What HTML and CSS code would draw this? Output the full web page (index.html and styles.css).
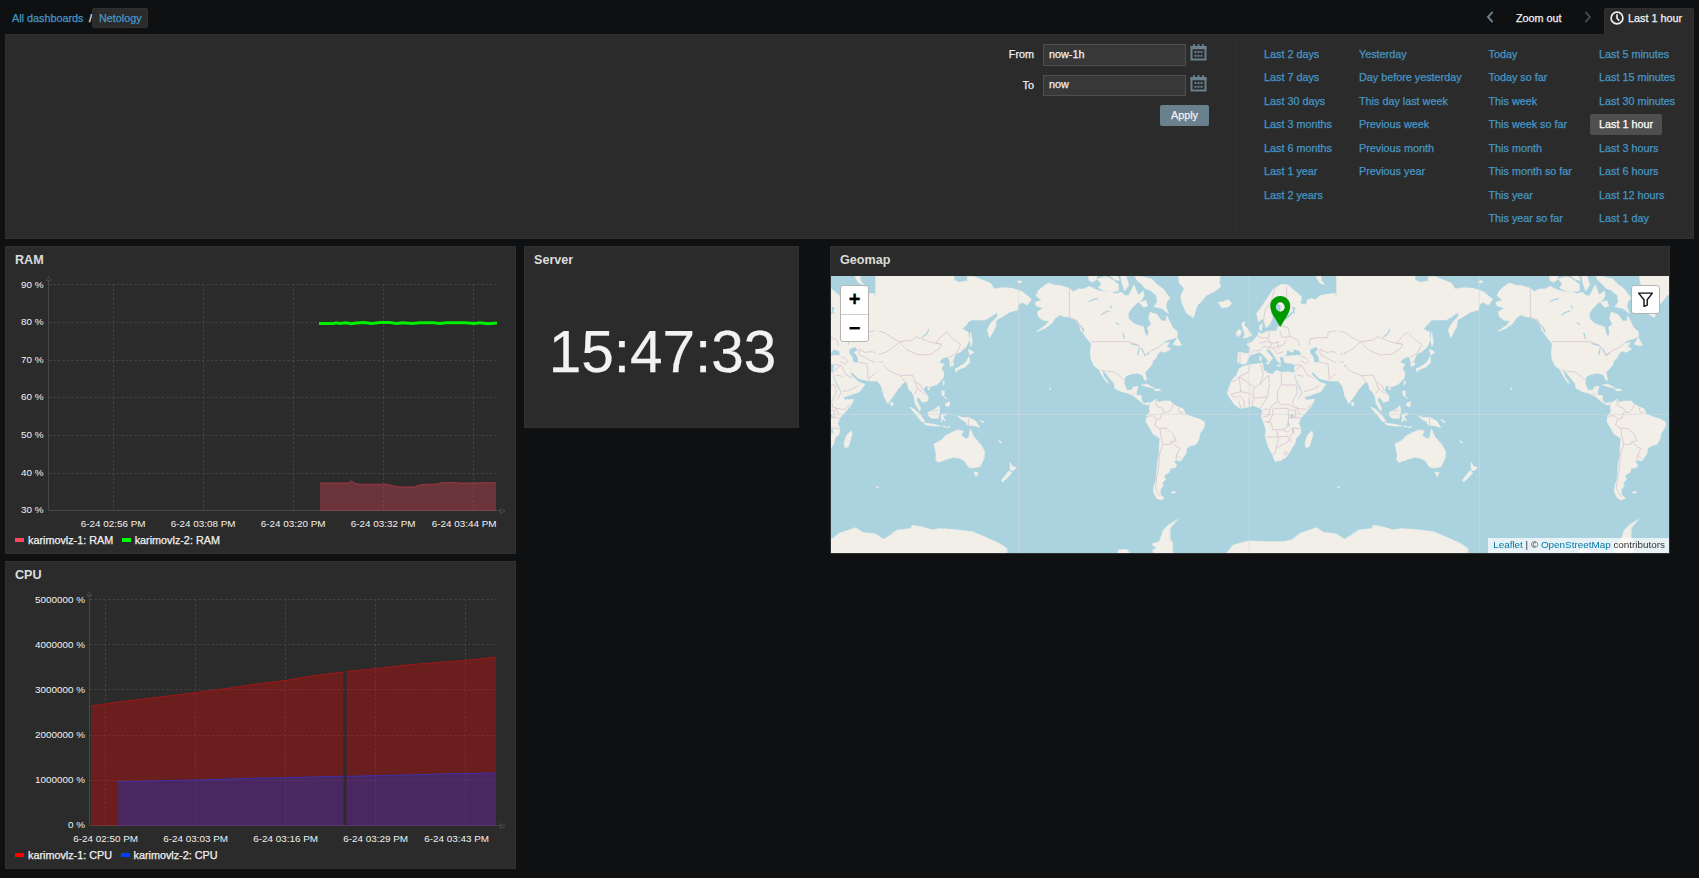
FILE: index.html
```html
<!DOCTYPE html>
<html lang="en">
<head>
<meta charset="utf-8">
<title>Netology</title>
<link rel="stylesheet" href="styles.css">
</head>
<body>
<header class="top">
  <nav class="crumbs"><a class="link">All dashboards</a><span class="slash">/</span><a class="crumb-current">Netology</a></nav>
  <div class="time-nav">
    <svg class="chev" viewBox="0 0 8 12"><path d="M6.600 .8 2 6l4.600 5.200"/></svg>
    <span class="zoom-out">Zoom out</span>
    <svg class="chev dim" viewBox="0 0 8 12"><path d="M1.400 .8 6 6l-4.600 5.200"/></svg>
    <div class="tab"><svg class="clock-icon" viewBox="0 0 14 14"><circle cx="7" cy="7" r="5.900"/><path d="M7 3.200V7.200l2.300 2.500"/></svg><span>Last 1 hour</span></div>
  </div>
</header>

<section class="filter">
  <form class="range">
    <div class="field"><label>From</label><input class="input" value="now-1h"><svg class="cal" viewBox="0 0 17 17"><path class="cal-body" d="M1.500 3.500h14v12h-14z"/><path class="cal-head" d="M.5 2h16v3.200H.5zM3 .300h2v3H3zM7.500 .300h2v3h-2zM12 .300h2v3h-2z"/><path class="cal-dots" d="M4.500 7h2v2h-2zM7.500 7h2v2h-2zM10.500 7h2v2h-2zM4.500 10.800h2v2h-2zM7.500 10.800h2v2h-2zM10.500 10.800h2v2h-2z"/></svg></div>
    <div class="field"><label>To</label><input class="input" value="now"><svg class="cal" viewBox="0 0 17 17"><path class="cal-body" d="M1.500 3.500h14v12h-14z"/><path class="cal-head" d="M.5 2h16v3.200H.5zM3 .300h2v3H3zM7.500 .300h2v3h-2zM12 .300h2v3h-2z"/><path class="cal-dots" d="M4.500 7h2v2h-2zM7.500 7h2v2h-2zM10.500 7h2v2h-2zM4.500 10.800h2v2h-2zM7.500 10.800h2v2h-2zM10.500 10.800h2v2h-2z"/></svg></div>
    <button class="apply" type="button">Apply</button>
  </form>
  <div class="presets">
    <ul><li>Last 2 days</li><li>Last 7 days</li><li>Last 30 days</li><li>Last 3 months</li><li>Last 6 months</li><li>Last 1 year</li><li>Last 2 years</li></ul>
    <ul><li>Yesterday</li><li>Day before yesterday</li><li>This day last week</li><li>Previous week</li><li>Previous month</li><li>Previous year</li></ul>
    <ul><li>Today</li><li>Today so far</li><li>This week</li><li>This week so far</li><li>This month</li><li>This month so far</li><li>This year</li><li>This year so far</li></ul>
    <ul><li>Last 5 minutes</li><li>Last 15 minutes</li><li>Last 30 minutes</li><li><span class="selected">Last 1 hour</span></li><li>Last 3 hours</li><li>Last 6 hours</li><li>Last 12 hours</li><li>Last 1 day</li></ul>
  </div>
</section>

<main class="board">
  <div class="col charts">
    <article class="widget graph">
      <h4>RAM</h4>
      <svg class="plot" viewBox="6 276 509 255">
        <path class="grid" d="M49 284.500H496M49 322.500H496M49 360.500H496M49 397.500H496M49 435.500H496M49 473.500H496M113.500 284V510M203.500 284V510M293.500 284V510M383.500 284V510M473.500 284V510"/>
        <path class="axis" d="M48.500 281V510.500H500M46 280.500l2.500-4 2.500 4zM500.500 508.500l4.500 2.500-4.500 2.500z"/>
        <path class="ram-fill" d="M320 483H349L351.500 480.500 354 483 359 484.300H387L394 486 400 487H414L422 484.500 438 484 441 482.800H496V511H320z"/>
        <path class="ram-line" d="M320 483H349L351.500 480.500 354 483 359 484.300H387L394 486 400 487H414L422 484.500 438 484 441 482.800 455 482.500 462 483.200 480 483 485 482.500 496 483"/>
        <path class="ram2-line" d="M319 323.600H333L336 322.700 340 323.600 346 322.800 351 323.800 356 323 364 322.600 372 323.400 380 322.600 390 322.600 396 323.400 402 322.700 412 323.500 420 322.700 434 322.700 440 323.500 446 322.700 465 322.700 474 323.500 480 322.700 488 323.700 497 323.100"/>
        <g class="tick end"><text x="43.500" y="288">90 %</text><text x="43.500" y="325">80 %</text><text x="43.500" y="363">70 %</text><text x="43.500" y="400">60 %</text><text x="43.500" y="438">50 %</text><text x="43.500" y="476">40 %</text><text x="43.500" y="513">30 %</text><text x="496.500" y="527">6-24 03:44 PM</text></g>
        <g class="tick mid"><text x="113.200" y="527">6-24 02:56 PM</text><text x="203.200" y="527">6-24 03:08 PM</text><text x="293.200" y="527">6-24 03:20 PM</text><text x="383.200" y="527">6-24 03:32 PM</text></g>
      </svg>
      <div class="legend"><i class="c-pink"></i><span>karimovlz-1: RAM</span><i class="c-green"></i><span>karimovlz-2: RAM</span></div>
    </article>
    <article class="widget graph">
      <h4>CPU</h4>
      <svg class="plot" viewBox="6 591 509 255">
        <path class="grid" d="M90 599.500H496M90 644.500H496M90 689.500H496M90 735.500H496M90 780.500H496M105.500 599V825M195.500 599V825M285.500 599V825M375.500 599V825M465.500 599V825"/>
        <path class="axis" d="M89.500 596V825.500H500M87 595.500l2.500-4 2.500 4zM500.500 823.500l4.500 2.500-4.500 2.500z"/>
        <path class="cpu-fill" d="M91 706L105.500 704 118 702 152 698 195.500 692.500 230 688 264 683 285.500 680.500 314.500 675.500 343.500 672V826H91zM346.500 671.500L375.500 668.700 406 665 439.500 662.300 465.500 660.500 496 657V826H346.500z"/>
        <path class="cpu2-fill" d="M117.500 781.700L195.500 780 250 778.300 285.500 777.700 343.500 776.300V826H117.500zM346.500 776.300L406 775 451 773.700 496 773V826H346.500z"/>
        <path class="cpu-line" d="M91 706L105.500 704 118 702 152 698 195.500 692.500 230 688 264 683 285.500 680.500 314.500 675.500 343.500 672M346.500 671.500L375.500 668.700 406 665 439.500 662.300 465.500 660.500 496 657"/>
        <path class="cpu2-line" d="M117.500 781.700L195.500 780 250 778.300 285.500 777.700 343.500 776.300M346.500 776.300L406 775 451 773.700 496 773"/>
        <g class="tick end"><text x="85" y="602.500">5000000 %</text><text x="85" y="648">4000000 %</text><text x="85" y="693">3000000 %</text><text x="85" y="738">2000000 %</text><text x="85" y="783">1000000 %</text><text x="85" y="828">0 %</text></g>
        <g class="tick mid"><text x="105.700" y="842">6-24 02:50 PM</text><text x="195.700" y="842">6-24 03:03 PM</text><text x="285.700" y="842">6-24 03:16 PM</text><text x="375.700" y="842">6-24 03:29 PM</text><text x="456.700" y="842">6-24 03:43 PM</text></g>
      </svg>
      <div class="legend"><i class="c-red"></i><span>karimovlz-1: CPU</span><i class="c-blue"></i><span>karimovlz-2: CPU</span></div>
    </article>
  </div>

  <article class="widget clock">
    <h4>Server</h4>
    <div class="time">15:47:33</div>
  </article>

  <article class="widget geomap">
    <h4>Geomap</h4>
    <div class="map">
      <svg class="world" viewBox="18 108 2514 831" preserveAspectRatio="none">
        <defs>
          <filter id="coast" filterUnits="userSpaceOnUse" x="0" y="90" width="2560" height="870"><feTurbulence type="fractalNoise" baseFrequency=".11" numOctaves="2" seed="4"/><feDisplacementMap in="SourceGraphic" scale="5" xChannelSelector="R" yChannelSelector="G"/></filter>
          <g id="earth">
            <g transform="translate(555 105)">
              <g class="land">
                <path d="M115 24L132 30 152 32 178 40 190 50 205 42 222 42 238 34 262 46 280 50 300 50 318 56 335 52 345 62 356 62 362 50 372 30 378 44 385 60 400 48 402 62 395 75 380 85 365 100 355 115 355 130 370 145 388 152 400 155 405 175 412 187 416 170 412 158 424 148 416 130 420 112 440 118 455 138 468 138 470 122 480 142 488 158 502 170 502 186 485 192 470 196 456 205 447 216 458 206 478 202 470 215 482 222 465 232 455 228 445 234 438 248 428 258 426 268 412 285 405 292 410 316 403 314 398 300 380 294 360 298 345 305 342 325 350 345 365 346 370 336 384 334 380 350 378 360 395 362 394 375 402 386 412 383 420 384 412 390 400 386 385 374 370 362 355 355 335 350 315 340 312 325 298 308 285 292 275 284 282 305 296 325 288 320 272 295 268 284 252 272 243 252 241 230 244 206 230 190 222 178 212 165 208 148 198 135 178 127 160 124 148 120 135 130 125 145 105 160 80 170 108 150 118 137 100 136 85 125 82 110 100 100 78 92 76 82 95 75 78 62 85 48 98 35z"/>
                <path d="M375 2L398 5 425 12 440 28 460 42 480 70 470 80 468 95 475 115 455 100 432 95 442 80 440 62 420 45 405 40 395 28 380 15zM262 12L285 5 300 10 325 28 325 48 300 50 280 46 265 38 275 28zM236 2h25l-2 12-12 8-10-6zM300 2h22l6 14-14-2zM332 2h16l8 28-12 18-8-24zM388 82l20-5 5 15-12 5zM490 208L502 188 514 210 505 212zM505 -5H632L628 20 632 35 612 50 590 60 575 78 560 95 550 128 530 115 518 90 512 65 522 40 508 25zM625 82L640 80 655 74 665 85 655 96 635 98zM395 330L410 327 425 335 432 340 415 336zM432 342h16l4 5h-17zM484 652l10-3 2 4-9 2zM118 338l5 3-2 3z"/>
                <path d="M420 384L438 373 445 382 460 378 480 378 490 388 505 396 520 402 526 418 545 425 570 433 584 442 582 458 570 475 567 492 558 508 540 513 530 520 528 535 512 558 498 555 492 560 500 570 496 578 480 580 478 592 466 598 462 605 467 612 456 625 460 632 450 645 452 660 463 670 452 675 440 670 430 650 432 630 438 615 440 590 442 565 447 540 448 510 450 490 430 478 420 460 408 440 410 422 420 410 418 395z"/>
              </g>
              <path class="lake" d="M362 206l24 6M388 218l-5 22M394 222l9 14M402 242l16-7M338 172l6 20M236 80l14-6 14-3M272 120l14-9 12-3M318 142l8 8M212 150l10 22M300 92l6 8M240 20l10 20"/>
              <path class="border" d="M178 40V127L200 135 212 155 222 165M244 200H356L384 210 398 225 404 240 425 226 448 216 458 206M272 284L290 290 310 290 325 300 342 315M366 352l8 8M437 375L442 395 458 400 462 412 475 412 485 400 490 388M505 398L508 412H520M412 424L428 422 440 432 450 432 458 412M440 432L434 450 448 460 470 460 490 478 498 498 482 500 480 508H458L452 480 450 460M482 500L498 515 510 520 500 540 498 555M500 540l12 10M458 508L448 540 446 575 440 610 436 640 450 665"/>
            </g>
            <g transform="translate(1185 105)">
              <g class="land">
                <path d="M58 280L75 272 100 268 128 265 130 285 145 295 158 298 168 286 185 292 205 290 222 294 222 305 232 330 245 355 258 375 284 373 275 392 258 412 243 428 236 445 243 462 240 478 228 490 225 505 212 525 200 545 185 556 165 559 158 540 147 520 135 485 138 465 130 440 124 425 128 405 118 398 100 392 85 396 60 400 45 390 32 372 22 355 28 335 38 312 50 300zM258 495L262 482 276 468 279 478 268 515 258 518 255 505z"/>
                <path d="M53 262L55 232 86 236 92 220 80 207 97 200 112 182 118 170 122 178 145 168 170 168 174 155 188 152 190 140 205 130 222 112 228 98 215 92 222 78 245 72 240 85 258 90 262 75 275 70 285 75 300 62 320 58 345 55 350 72 365 78 358 55 355 25 365 -5 450 -5V310L432 325 415 345 398 370 386 386 378 360 370 330 355 318 335 318 305 313 295 308 278 290 275 298 292 315 300 322 318 328 302 350 280 358 252 367 245 345 230 315 222 290 226 270 215 265 195 263 190 245 215 242 245 240 240 228 222 222 218 232 200 225 198 240 188 245 178 245 182 265 172 258 162 240 150 225 135 222 150 240 158 250 148 262 135 245 120 232 95 238 85 250 78 265 70 268z"/>
                <path d="M110 115L125 95 145 65 160 42 185 28 205 30 215 40 245 65 240 78 215 85 218 108 195 125 180 118 184 95 170 80 160 95 152 112 158 128 148 150 138 158 130 130 115 140zM65 145L75 140 72 150 80 158 92 175 95 182 70 190 75 178 70 165zM50 170L60 163 64 170 60 182 50 184zM119 152l8-6-2 20-6-2zM290 -5h12L304 16 314 30 300 24 290 10zM394 384l7-2 1 9-5 2zM119 246l4-3 1 13-4 1zM138 262l10 1-3 6zM172 270h9v3h-9z"/>
              </g>
              <path class="water" d="M270 224L288 215 295 225 285 232 295 245 298 262 284 262 280 245 272 236zM210 420l9-2 2 8-7 5zM372 217l18-5 2 5-18 3z"/>
              <path class="lake" d="M205 440l3 15M218 460l4 14M355 10l4 40 8 20M372 3l6 30M390 15l10 18M220 108l4 8"/>
              <path class="border" d="M268 210L270 192 295 188 322 188 325 172 355 165 385 172 400 185 425 200 405 215 385 235 360 238 340 230 318 232 300 222V238L322 250 345 262 360 248 375 242M245 245l12 4 10 10-8 8-16-8M226 268l20 4 16 28 20 10M222 290l24-20M232 300l18 4M298 262l26 4 4 48M328 312l24-20 12-24 22 5 16 28 24 10 24-4M252 350l24-6 22-12M165 38l-12 42-18 26-4 28M200 36v30l-8 30M112 182l18 8 16-2 2-20M118 205l20-6 20 6 20-4M132 215l28 4 30-10 10-16M180 168l6 20 28-4 22 14 2 16M142 190l14 16-10 18M160 220l12 16 18-6M170 200l8 24M178 152l26 6 6 26M60 235v28M92 235l8-8 20 0 10-12"/>
              <path class="border" d="M92 268L84 292 58 305 45 318H28M58 305L62 350 32 358M58 305L104 338 118 328 146 300M122 268L130 300 120 328M146 300L148 330 142 365 104 370 98 352 104 338M184 292V330H228M184 330L174 345 172 375 184 390 205 388 218 395M228 330L232 352 218 380 222 398 258 404 275 386M245 355l-10 18M62 350L88 355 98 368M32 358l14 10 14-6 12 16M58 380l4 18M72 376v20M88 370v24M100 370l-4 22M142 365l-20 34M130 402L148 404 158 390 174 380M128 425l18-2 4-20M158 402v18L148 440H134M160 400h44l2 28-4 28-16 8-28 0-4-20-16-4M206 404l20 2v22h-22M242 430l-20-4M136 486H168L204 484M170 464l4 22M186 464l18 8 14-14 24 4M218 458v18l-14 14 12 12M176 486L168 520 180 512 198 504 214 490M168 520l-2 14-12 6M192 534l6-5 5 6-6 6zM228 395l12 25"/>
            </g>
            <g transform="translate(1545 105)">
              <g class="land">
                <path d="M-10 -5H225V15L240 22 265 18 265 5 285 5 310 15 335 25 345 42 370 38 400 40 430 50 458 73 445 90 430 82 418 88 415 105 390 112 370 125 352 135 350 155 332 188 325 165 335 145 355 125 355 112 330 128 318 135H275L250 162 268 172 270 195 262 215 245 230 230 238 222 255 224 270 214 275 212 255 205 245 190 250 180 262 195 268 187 280 195 295 192 310 175 328 155 335 140 332 133 345 148 365 145 378 130 382 118 365 112 375 125 400 122 408 108 385 105 365 98 350 90 345 85 325 75 318 55 335 38 355 28 385 15 365 8 335 -10 310z"/>
                <path d="M275 172L280 200 276 215 272 195zM268 222L285 232 272 240zM270 245L272 262 260 275 235 285 230 282 250 270 262 260zM228 280l8 2-4 10zM192 318l5 3-4 10zM145 338h8l-4 8zM188 348h8l-1 17 10 7-15-10zM200 385l12-5-2 15-10-3zM92 396L105 402 125 420 138 440 128 440 112 420zM135 444L165 448 185 453 165 453 138 449zM148 412L165 405 180 392 182 408 178 430 158 430 148 422zM186 418L206 416 192 424 200 438 190 432 188 442zM235 422L250 428 268 427 290 438 302 457 285 452 265 450 260 440 245 432zM190 453l12 2-2 2zM204 458l8-4 2 2zM414 20l10-3 5 4-8 3zM303 436l12 4-2 3zM358 496l10 6-2 3z"/>
              </g>
              <path class="lake" d="M130 186l14-10 5-14"/>
              <path class="border" d="M0 168L20 175 40 190 62 200 100 195 112 185 150 200 188 208 182 220 155 238 120 240 85 225 70 210 62 200 40 220 20 232 0 238M188 208L170 205 190 180 205 172 215 185 222 192 245 208 232 235 205 250M0 262l12-2M12 270L30 288 65 302 100 300 108 320 125 330 132 345M65 302l14 20M108 320l8 22 24 16M116 342l-10 16M268 428v22M160 410l18-4M216 262l8-2"/>
            </g>
            <g class="land" transform="translate(1383 0)">
              <path d="M327 612L350 600 360 588 385 575 400 570 415 573 408 587 425 597 432 590 436 567 445 588 455 600 468 615 479 635 477 655 465 680 440 684 430 680 418 662 405 655 385 652 365 658 340 667 332 660 334 645zM447 696L460 698 453 710zM555 667L563 680 574 682 565 692 556 690zM552 692L560 698 545 715 533 726 530 720zM155 740h5v3h-5z"/>
            </g>
            <path class="land" d="M1195 950L1225 915 1270 903 1335 905 1375 905 1400 900 1425 880 1475 863 1495 877 1535 882 1558 898 1575 888 1600 870 1640 866 1645 856 1675 861 1705 870 1725 866 1765 868 1825 875 1865 892 1905 910 1928 925V950zM988 950L983 930 995 925 980 912 1003 905 1010 885 1015 870 1030 855 1058 838 1035 865 1035 900 1042 905 1043 950zM876 950L880 930 905 928 922 950z"/>
          </g>
        </defs>
        <g filter="url(#coast)"><use href="#earth" x="-1383"/><use href="#earth"/><use href="#earth" x="1383"/></g>
        <path class="meridian" d="M18 523H2532M580.500 108V939M1272 108V939M1963 108V939"/>
      </svg>
      <svg class="pin" viewBox="0 0 20 31"><path fill-rule="evenodd" d="M10 0C4.400 0 0 4.400 0 10c0 7 7 15 10 21 3-6 10-14 10-21C20 4.400 15.600 0 10 0zm0 6.300a4.500 4.700 0 1 1 0 9.400 4.500 4.700 0 0 1 0-9.400z"/></svg>
      <div class="zoomer"><b>+</b><b>−</b></div>
      <div class="map-filter"><svg viewBox="0 0 14 14"><path d="M.6 1h12.800L8.600 7.200v5l-3 1.200v-6.200z"/></svg></div>
      <div class="credit"><a>Leaflet</a> | © <a>OpenStreetMap</a> contributors</div>
    </div>
  </article>
</main>
</body>
</html>
```
FILE: styles.css
```css
* { box-sizing: border-box; }
body {
  margin: 0;
  width: 1699px;
  height: 878px;
  overflow: hidden;
  background: #0e1012;
  color: #f2f2f2;
  font: 10.8px/14px "Liberation Sans", Arial, sans-serif;
  -webkit-text-stroke: .25px currentColor;
}
svg { display: block; flex: none; }

.top { display: flex; justify-content: space-between; height: 34px; padding: 8px 5px 0 12px; }
.crumbs { display: flex; height: 20px; line-height: 20px; }
.link, .crumb-current { color: #4796c4; }
.link { width: 72px; white-space: nowrap; }
.slash { width: 8px; padding-left: 5px; }
.crumb-current { width: 56px; padding-left: 6px; background: #2b2b2b; border: 1px solid #303030; border-radius: 2px; line-height: 18px; }

.time-nav { display: flex; line-height: 20px; }
.chev { width: 8px; height: 12px; margin-top: 3px; fill: none; stroke: #69808d; stroke-width: 2; }
.chev.dim { stroke: #3c4a52; }
.zoom-out { width: 68px; margin-left: 22px; white-space: nowrap; }
.tab { display: flex; gap: 4px; width: 90px; height: 27px; margin-left: 12px; padding-left: 5px; background: #2b2b2b; border: 1px solid #303030; border-bottom: 0; border-radius: 2px 2px 0 0; line-height: 18px; white-space: nowrap; }
.clock-icon { width: 14px; height: 14px; margin-top: 2px; fill: none; stroke: #f2f2f2; stroke-width: 1.6; }

.filter { display: flex; justify-content: flex-end; width: 1689px; height: 205px; margin-left: 5px; padding: 9px 0 9px; background: #2b2b2b; border: 1px solid #303030; }
.range { display: flex; flex-direction: column; align-items: flex-end; width: 230px; padding-right: 27px; border-right: 1px solid #323232; }
.field { display: flex; align-items: flex-start; height: 30.500px; }
.field label { padding: 3px 9px 0 0; }
.input { width: 143px; height: 21.500px; padding: 0 5px 2px; background: #383838; border: 1px solid #4f4f4f; color: #f2f2f2; font: inherit; outline: 0; }
.cal { width: 17px; height: 17px; margin: 0 2px 0 4px; }
.cal-body { fill: none; stroke: #69808d; stroke-width: 2; }
.cal-head, .cal-dots { fill: #69808d; }
.apply { width: 49px; height: 21px; padding: 0 0 1px; background: #69808d; border: 0; border-radius: 2px; color: #f2f2f2; font: inherit; }
.presets { display: grid; grid-template-columns: 95px 129.500px 110.500px 94px; padding-left: 27px; }
.presets ul { margin: 0; padding: 0; list-style: none; }
.presets li { height: 23.430px; color: #4796c4; line-height: 21px; white-space: nowrap; }
.selected { display: block; width: 72px; height: 21px; margin-left: -9px; padding-left: 9px; background: #4f4f4f; border-radius: 2px; color: #fff; }

.board { display: flex; align-items: flex-start; margin: 7px 0 0 5px; }
.charts { display: flex; flex-direction: column; gap: 7px; margin-right: 8px; }
.widget { background: #2b2b2b; border: 1px solid #303030; }
.widget h4 { height: 29px; margin: 0; padding: 0 9px; color: #dcdcdc; font-size: 12.600px; line-height: 27px; -webkit-text-stroke: 0; }
.graph { width: 511px; height: 308px; }
.plot { width: 509px; height: 255px; }
.grid { fill: none; stroke: #424242; stroke-dasharray: 2.500 2; }
.axis { fill: none; stroke: #484848; }
.tick { fill: #f2f2f2; font-size: 9.900px; }
.end { text-anchor: end; }
.mid { text-anchor: middle; }
.ram-fill { fill: #ff465c; fill-opacity: .3; }
.ram-line { fill: none; stroke: #b03a49; stroke-opacity: .8; }
.ram2-line { fill: none; stroke: #00f000; stroke-width: 3; }
.cpu-fill { fill: #ff0000; fill-opacity: .3; }
.cpu2-fill { fill: #0040ff; fill-opacity: .3; }
.cpu-line { fill: none; stroke: #a01616; }
.cpu2-line { fill: none; stroke: #3a30a8; }
.legend { display: flex; align-items: center; height: 18px; padding-left: 9px; white-space: nowrap; }
.legend i { width: 9px; height: 3.500px; margin-right: 4px; }
.legend span { margin-right: 8.500px; }
.c-pink { background: #ff465c; }
.c-green { background: #0f0; }
.c-red { background: #f00; }
.c-blue { background: #0040ff; }

.clock { width: 275px; height: 182px; margin-right: 31px; }
.time { height: 151px; padding-left: 2px; font-size: 58.500px; line-height: 151px; text-align: center; }

.geomap { width: 840px; height: 308px; }
.map { position: relative; width: 838px; height: 277px; background: #aad3df; overflow: hidden; }
.world { width: 838px; height: 277px; }
.land { fill: #f2efe9; stroke: #f2efe9; stroke-width: 2; stroke-linejoin: round; }
.water { fill: #aad3df; }
.lake { fill: none; stroke: #aad3df; stroke-width: 3.500; }
.border { fill: none; stroke: #dac9d4; stroke-width: 2.800; stroke-linejoin: round; }
.meridian { fill: none; stroke: #d5d8dc; stroke-opacity: .6; stroke-width: 3; }
.pin { position: absolute; left: 439px; top: 20px; width: 20.500px; height: 31px; fill: #090; }
.zoomer { position: absolute; left: 9px; top: 9px; width: 29px; height: 57px; border: 1px solid #b4b4b0; border-radius: 3px; background: #fff; color: #000; }
.zoomer b { display: block; height: 27.500px; font-size: 20px; line-height: 27px; text-align: center; }
.zoomer b + b { border-top: 1px solid #ccc; line-height: 26px; }
.map-filter { position: absolute; right: 9px; top: 9px; display: grid; place-items: center; width: 29px; height: 29px; border: 1px solid #b4b4b0; border-radius: 3px; background: #fff; }
.map-filter svg { width: 15px; height: 15px; fill: none; stroke: #111; stroke-width: 1.300; stroke-linejoin: round; }
.credit { position: absolute; right: 0; bottom: 0; width: 181px; height: 15px; padding-right: 4px; background: rgba(255, 255, 255, .7); color: #333; font-size: 9.900px; line-height: 14px; text-align: right; white-space: nowrap; -webkit-text-stroke: 0; }
.credit a { color: #0078a8; }
```
